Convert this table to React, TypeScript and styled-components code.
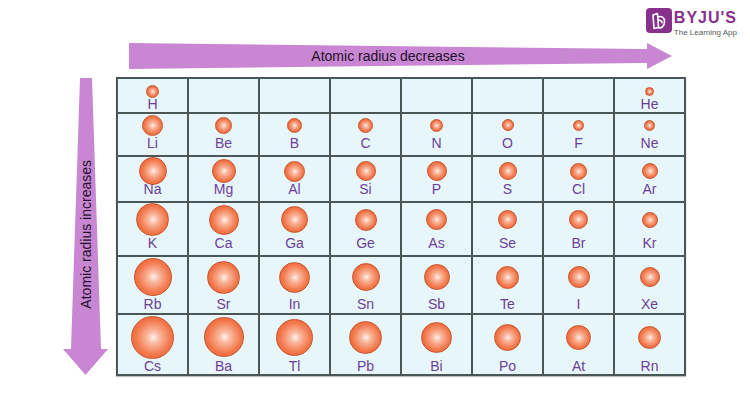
import React from 'react';
import styled, { createGlobalStyle } from 'styled-components';

const GlobalStyle = createGlobalStyle`
  html, body {
    margin: 0;
    padding: 0;
    background: #fff;
  }
  body {
    font-family: 'Liberation Sans', Arial, sans-serif;
  }
`;

const Page = styled.div`
  width: 750px;
  height: 403px;
  overflow: hidden;
  background: #fff;
`;

const Header = styled.header`
  height: 43px;
  box-sizing: border-box;
  padding: 8px 13px 0 0;
  display: flex;
  justify-content: flex-end;
  align-items: flex-start;
`;

const Logo = styled.div`
  display: flex;
  align-items: flex-start;
  gap: 2px;
`;

const LogoText = styled.div`
  display: flex;
  flex-direction: column;
  margin-top: 2px;
`;

const Brand = styled.span`
  font-size: 16px;
  line-height: 16px;
  font-weight: bold;
  letter-spacing: 1px;
  color: #87308c;
`;

const Tagline = styled.span`
  margin-top: 2px;
  font-size: 8px;
  line-height: 9px;
  color: #5a5a5a;
`;

const TopArrow = styled.div`
  position: relative;
  margin-left: 129px;
  width: 543px;
  height: 26px;
  display: flex;
  justify-content: center;
  padding-right: 25px;
  box-sizing: border-box;
`;

const ArrowShape = styled.svg`
  position: absolute;
  inset: 0;
  width: 100%;
  height: 100%;
`;

const ArrowLabel = styled.span`
  position: relative;
  font-size: 14px;
  line-height: 26px;
  color: #1d1129;
  white-space: nowrap;
`;

const Main = styled.main`
  margin-top: 8px;
  display: flex;
  align-items: flex-start;
`;

const SideArrow = styled.div`
  position: relative;
  margin: 1px 0 0 63px;
  width: 45px;
  height: 297px;
  display: flex;
  flex-direction: column;
  align-items: center;
  padding-top: 82px;
  box-sizing: border-box;
`;

const SideLabel = styled(ArrowLabel)`
  writing-mode: vertical-rl;
  transform: rotate(180deg);
  line-height: 18px;
`;

const Table = styled.div`
  margin-left: 8px;
  display: grid;
  grid-template-columns: repeat(8, 69px);
  grid-template-rows: 33px 41px 44px 52px 56px 59px;
  gap: 2px;
  padding: 2px;
  background: #4b5656;
  box-shadow: 0 1px 1px rgba(0, 0, 0, 0.25);
`;

const Cell = styled.div<{ $top: number; $bottom: number }>`
  background: #e7f6fa;
  display: flex;
  flex-direction: column;
  align-items: center;
  padding: ${({ $top }) => $top}px 0 ${({ $bottom }) => $bottom}px;
  box-sizing: border-box;
`;

const SphereSlot = styled.div`
  flex: 1;
  min-height: 0;
  display: flex;
  align-items: center;
  justify-content: center;
`;

const Sphere = styled.span<{ $size: number }>`
  display: block;
  flex-shrink: 0;
  width: ${({ $size }) => $size}px;
  height: ${({ $size }) => $size}px;
  border-radius: 50%;
  box-sizing: border-box;
  border: 1px solid #c9542a;
  background: radial-gradient(
    circle at 52% 50%,
    #fef1ec 0%,
    #f9b79e 22%,
    #f3794d 58%,
    #ec5f31 85%,
    #e1552a 100%
  );
`;

const Symbol = styled.span`
  position: relative;
  font-size: 14px;
  line-height: 14px;
  color: #6b3f99;
`;

type Atom = [string, number] | null;

interface Row {
  top: number;
  bottom: number;
  atoms: Atom[];
}

const rows: Row[] = [
  {
    top: 6,
    bottom: 1,
    atoms: [['H', 13], null, null, null, null, null, null, ['He', 9]],
  },
  {
    top: 0,
    bottom: 5,
    atoms: [
      ['Li', 21], ['Be', 17], ['B', 15], ['C', 15],
      ['N', 13], ['O', 12], ['F', 11], ['Ne', 11],
    ],
  },
  {
    top: 3,
    bottom: 5,
    atoms: [
      ['Na', 28], ['Mg', 24], ['Al', 21], ['Si', 20],
      ['P', 20], ['S', 18], ['Cl', 17], ['Ar', 16],
    ],
  },
  {
    top: 0,
    bottom: 5,
    atoms: [
      ['K', 33], ['Ca', 30], ['Ga', 27], ['Ge', 22],
      ['As', 21], ['Se', 19], ['Br', 19], ['Kr', 16],
    ],
  },
  {
    top: 0,
    bottom: 2,
    atoms: [
      ['Rb', 38], ['Sr', 33], ['In', 31], ['Sn', 28],
      ['Sb', 26], ['Te', 23], ['I', 22], ['Xe', 20],
    ],
  },
  {
    top: 0,
    bottom: 1,
    atoms: [
      ['Cs', 43], ['Ba', 40], ['Tl', 37], ['Pb', 33],
      ['Bi', 31], ['Po', 27], ['At', 25], ['Rn', 23],
    ],
  },
];

const ARROW = '#c986d3';

const LogoMark = () => (
  <svg width="26" height="25" viewBox="0 0 26 25">
    <rect width="26" height="25" rx="4" fill="#87308c" />
    <path
      d="M7 7 L11.5 5.5 L12.5 19.5 L8 20.5 Z M11.7 9 C15.5 7.5 18.5 9.5 18.5 13.5 C18.5 18 15.5 20.5 12.4 19.8 M12 12.5 C14.5 11.8 16 13 16 14.8"
      fill="none"
      stroke="#fff"
      strokeWidth="1.6"
      strokeLinejoin="round"
      strokeLinecap="round"
    />
  </svg>
);

const App: React.FC = () => (
  <Page>
    <GlobalStyle />
    <Header>
      <Logo>
        <LogoMark />
        <LogoText>
          <Brand>BYJU'S</Brand>
          <Tagline>The Learning App</Tagline>
        </LogoText>
      </Logo>
    </Header>

    <TopArrow>
      <ArrowShape viewBox="0 0 543 26" preserveAspectRatio="none">
        <polygon
          points="0,0 518,6 518,0 543,13 518,26 518,20 0,26"
          fill={ARROW}
        />
      </ArrowShape>
      <ArrowLabel>Atomic radius decreases</ArrowLabel>
    </TopArrow>

    <Main>
      <SideArrow>
        <ArrowShape viewBox="0 0 45 297" preserveAspectRatio="none">
          <polygon
            points="17,0 29,0 38,271 45,271 22.5,297 0,271 8,271"
            fill={ARROW}
          />
        </ArrowShape>
        <SideLabel>Atomic radius increases</SideLabel>
      </SideArrow>

      <Table>
        {rows.map((row, r) =>
          row.atoms.map((atom, c) => (
            <Cell key={`${r}-${c}`} $top={row.top} $bottom={row.bottom}>
              {atom && (
                <>
                  <SphereSlot>
                    <Sphere $size={atom[1]} />
                  </SphereSlot>
                  <Symbol>{atom[0]}</Symbol>
                </>
              )}
            </Cell>
          ))
        )}
      </Table>
    </Main>
  </Page>
);

export default App;
